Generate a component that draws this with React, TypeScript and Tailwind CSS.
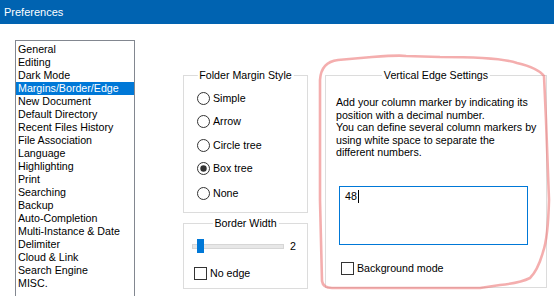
import React from 'react';

const FONT = { fontFamily: '"Liberation Sans", Arial, sans-serif' };

const CATEGORIES = [
  'General',
  'Editing',
  'Dark Mode',
  'Margins/Border/Edge',
  'New Document',
  'Default Directory',
  'Recent Files History',
  'File Association',
  'Language',
  'Highlighting',
  'Print',
  'Searching',
  'Backup',
  'Auto-Completion',
  'Multi-Instance & Date',
  'Delimiter',
  'Cloud & Link',
  'Search Engine',
  'MISC.',
];

const MARGIN_STYLES = [
  { label: 'Simple', gap: 0 },
  { label: 'Arrow', gap: 10 },
  { label: 'Circle tree', gap: 11 },
  { label: 'Box tree', gap: 10 },
  { label: 'None', gap: 12 },
];

function GroupBox({ title, className, children }: { title: string; className: string; children: React.ReactNode }) {
  return (
    <div className={`relative border border-[#dcdcdc] ${className}`}>
      <div className="absolute left-1/2 top-[-7px] -translate-x-1/2 bg-white px-[2px] leading-[13px] whitespace-nowrap">
        {title}
      </div>
      {children}
    </div>
  );
}

function Radio({ checked }: { checked?: boolean }) {
  return (
    <svg width="13" height="13" viewBox="0 0 13 13" className="shrink-0">
      <circle cx="6.5" cy="6.5" r="6" fill="#fff" stroke="#333" strokeWidth="1" />
      {checked && <circle cx="6.5" cy="6.5" r="3.2" fill="#333" />}
    </svg>
  );
}

function Checkbox() {
  return <div className="w-[13px] h-[13px] border border-[#333] bg-white shrink-0" />;
}

export default function App() {
  return (
    <div className="relative w-[554px] h-[296px] overflow-hidden bg-white text-black text-[10.67px]" style={FONT}>
      {/* Title bar */}
      <div className="h-[24px] bg-[#0063b1] text-white text-[11px] pl-[4px] flex items-center">Preferences</div>

      <div className="flex pl-[15px] pt-[16px]">
        {/* Category list */}
        <div className="w-[120px] h-[270px] shrink-0 border border-[#828790] pt-[2px]">
          {CATEGORIES.map((c) => (
            <div
              key={c}
              className={`h-[13px] leading-[13px] pl-[2px] whitespace-nowrap ${
                c === 'Margins/Border/Edge' ? 'bg-[#0078d7] text-white' : ''
              }`}
            >
              {c}
            </div>
          ))}
        </div>

        {/* Middle column */}
        <div className="ml-[48px] w-[125px] pt-[35px] shrink-0">
          <GroupBox title="Folder Margin Style" className="h-[138px] pt-[16px] pl-[13px]">
            {MARGIN_STYLES.map((s) => (
              <div key={s.label} className="flex items-center h-[13px]" style={{ marginTop: s.gap }}>
                <Radio checked={s.label === 'Box tree'} />
                <span className="ml-[3px] leading-[13px]">{s.label}</span>
              </div>
            ))}
          </GroupBox>

          <GroupBox title="Border Width" className="mt-[10px] h-[66px] pt-[15px]">
            <div className="flex items-center h-[14px] pl-[8px]">
              <div className="relative w-[90px] h-[3px] bg-[#e7e7e7] border border-[#d6d6d6] box-content">
                <div className="absolute left-[4px] top-[-6px] w-[7px] h-[14px] bg-[#0078d7]" />
              </div>
              <span className="ml-[6px]">2</span>
            </div>
            <div className="flex items-center mt-[14px] pl-[10px]">
              <Checkbox />
              <span className="ml-[3px] leading-[13px]">No edge</span>
            </div>
          </GroupBox>
        </div>

        {/* Vertical edge settings */}
        <div className="ml-[17px] w-[222px] pt-[35px] shrink-0">
          <GroupBox title="Vertical Edge Settings" className="h-[213px] pt-[20px]">
            <div className="pl-[10px] leading-[12.5px] whitespace-nowrap">
              <div>Add your column marker by indicating its</div>
              <div>position with a decimal number.</div>
              <div>You can define several column markers by</div>
              <div>using white space to separate the</div>
              <div>different numbers.</div>
            </div>
            <div className="ml-[13px] mt-[27px] w-[189px] h-[59px] border border-[#0078d7] pl-[5px] pt-[3px] flex items-start">
              <span className="leading-[13px]">48</span>
              <span className="w-px h-[13px] bg-black ml-[1px]" />
            </div>
            <div className="flex items-center ml-[15px] mt-[17px]">
              <Checkbox />
              <span className="ml-[3px] leading-[13px]">Background mode</span>
            </div>
          </GroupBox>
        </div>
      </div>

      {/* Hand-drawn highlight */}
      <svg className="absolute inset-0 pointer-events-none" width="554" height="296" viewBox="0 0 554 296">
        <path
          d="M 320 80 Q 321 62 338 60 L 372 57 Q 400 55 406 56 L 440 57 Q 500 57 517 63 Q 538 68 544 76 L 546 120 L 549 200 Q 548 238 543 252 Q 538 270 530 278 Q 520 283 500 285 L 480 288 L 332 288 Q 323 288 322 281 L 320 200 Z"
          fill="none"
          stroke="rgba(236,120,120,0.6)"
          strokeWidth="2.6"
          strokeLinejoin="round"
        />
      </svg>
    </div>
  );
}
